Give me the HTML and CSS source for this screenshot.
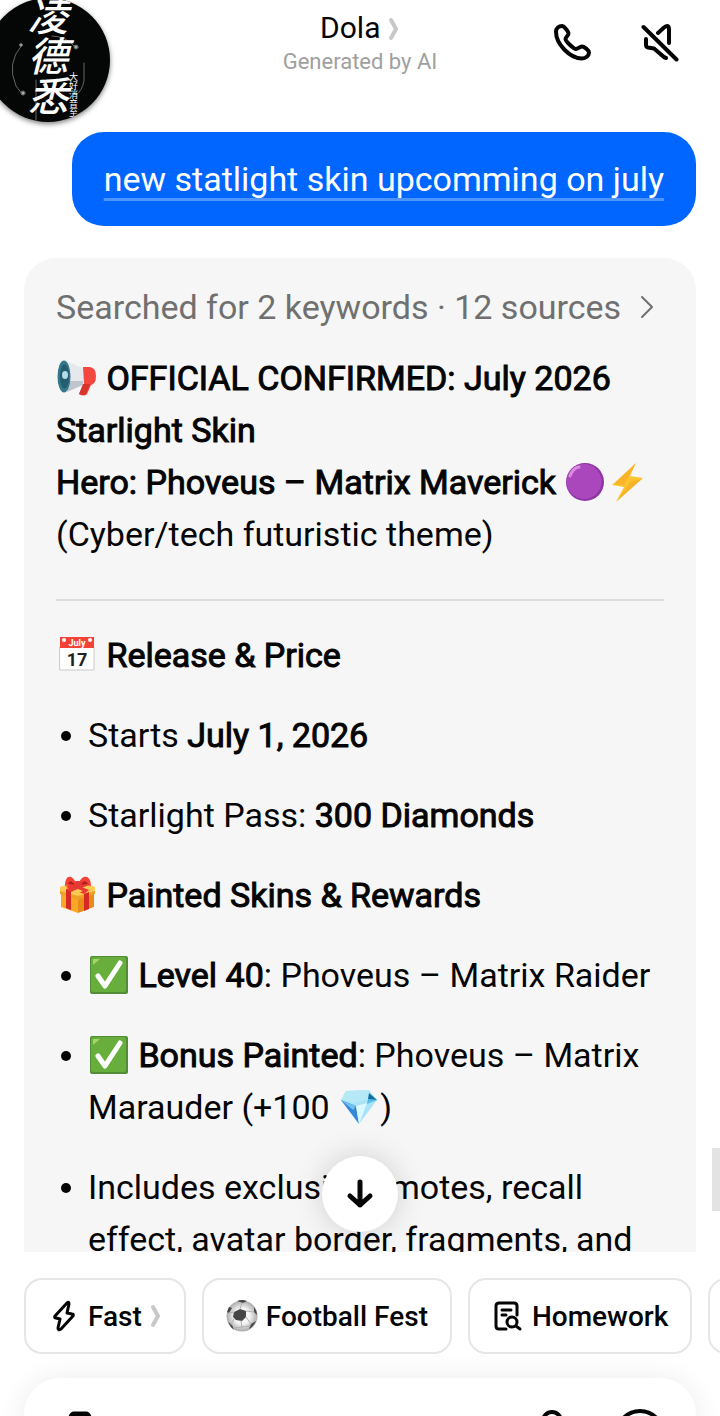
FILE: index.html
```html
<!DOCTYPE html>
<html lang="en">
<head>
    <meta charset="UTF-8">
    <meta name="viewport" content="width=device-width, initial-scale=1.0">
    <title>Dola</title>
    <link rel="stylesheet" href="styles.css">
</head>
<body>
    <header class="header">
        <div class="header-title">
            <h1>
                <a href="#">Dola
                    <svg class="chevron" viewBox="0 0 12 26"><path d="M3 4l5 9-5 9"/></svg>
                </a>
            </h1>
            <p>Generated by AI</p>
        </div>
        <div class="header-actions">
            <button class="icon-btn" aria-label="Call">
                <svg viewBox="0 0 40 40"><path d="M4 10C4 6 7 4 10 4C12 4 16 9 16.500 11C17 13 13.500 15 13.500 17C13.500 19 21.500 27 24 27C26 27 27.500 24.500 30 24.500C32 24.500 37 28 37 30.500C37 34 33.500 36.500 30 36.500C18 36.500 4 22 4 10Z"/></svg>
            </button>
            <button class="icon-btn" aria-label="Unmute">
                <svg viewBox="0 0 40 40"><path d="M3.500 5L36.500 37.500M18 11l6-5.500q5-4 5 2V21M6 17V23q0 2 2 2.500l6 1 7 6q3 3 5 3.500"/></svg>
            </button>
        </div>
    </header>

    <!-- Floating bubble -->
    <div class="avatar">
        <svg class="avatar-ring" viewBox="0 0 124 124"><path d="M36 47Q20 65 30 88L37 97M66 38Q80 38 89 49M98 65v18q-2 10-8 14M50 82v42"/><circle cx="35" cy="47" r="1.500"/><circle cx="90" cy="49" r="2"/><circle cx="37" cy="95" r="2"/></svg>
        <div class="avatar-name" lang="zh">凌德悉</div>
        <div class="avatar-motto" lang="zh">大好消音至</div>
    </div>

    <div class="chat-wrap">
        <main class="chat">
            <div class="message-user"><span>new statlight skin upcomming on july</span></div>

            <article class="message-bot">
                <a class="sources" href="#">
                    Searched for 2 keywords · 12 sources
                    <svg viewBox="0 0 16 28"><path d="M3 4l10 10L3 24"/></svg>
                </a>
                <p>
                    <svg class="emoji" viewBox="0 0 42 42"><path d="M10 4L27 11V27L10 35Z" fill="#e5e8ed"/><path d="M13 24L27 24V28L11 35Z" fill="#bfc5cf"/><ellipse cx="8" cy="19.500" rx="6.500" ry="16" fill="#31788a"/><ellipse cx="8.500" cy="19.500" rx="4.500" ry="12" fill="#255c6e"/><ellipse cx="9" cy="18" rx="3" ry="4" fill="#b4dbe8"/><path d="M27 10h7q6 1 6 9t-5 9l-4 9q-3 3-8 0l5-10z" fill="#f4483e"/><path d="M27 27h7l-4 10q-3 2-7 0z" fill="#d8342d"/></svg>
                    <strong>OFFICIAL CONFIRMED: July 2026 Starlight Skin</strong><br>
                    <strong>Hero: Phoveus – Matrix Maverick</strong>
                    <span class="emoji-pair"><svg class="emoji" viewBox="0 0 42 42"><circle cx="21" cy="21" r="19" fill="#8e35a5"/><circle cx="20" cy="20.500" r="17.500" fill="#ab47bc"/><path d="M6 15Q9 7 15 6" stroke="#d98be0" stroke-width="3" stroke-linecap="round" fill="none"/></svg><svg class="emoji" viewBox="0 0 42 42"><path d="M30 2L6 24l12 2-8 15 27-24-13-2z" fill="#fcc42d"/><path d="M30 2L8 23l10 1zM25 20l-14 20 25-22z" fill="#f7a928" opacity=".6"/></svg></span><br>
                    (Cyber/tech futuristic theme)
                </p>
                <hr>
                <h2>
                    <svg class="emoji" viewBox="0 0 42 42"><path d="M4 13h34v23H4z" fill="#fff" stroke="#c9c9c9"/><path d="M4 3h34v11H4z" fill="#f44336"/><circle cx="8" cy="6" r="2" fill="#fff"/><circle cx="34" cy="6" r="2" fill="#fff"/><text class="cal-month" x="21" y="12">July</text><text class="cal-day" x="21" y="32">17</text></svg>
                    Release &amp; Price
                </h2>
                <ul>
                    <li>Starts <strong>July 1, 2026</strong></li>
                    <li>Starlight Pass: <strong>300 Diamonds</strong></li>
                </ul>
                <h2>
                    <svg class="emoji" viewBox="0 0 42 42"><path d="M5 17l17 5v17L5 33z" fill="#f9a825"/><path d="M22 22l16-5v16l-16 6z" fill="#e88b19"/><path d="M4 13l18-6 17 6v6l-17 6-18-6z" fill="#ffca52"/><path d="M4 17v3l18 6 17-6v-3l-17 5z" fill="#eda025"/><path d="M10 15l5 2v19l-5-2zM28 20l5-2v17l-5 2z" fill="#d62824"/><path d="M10 15l18-7 5 3-18 7zM15 9l18 7-5 4-18-7z" fill="#ec3834"/><path d="M17 17l5-2 5 2-5 2z" fill="#ffca52"/><path d="M21 11C16-1 9 1 9 12q6-2 12 1zM22 11C26-1 35 1 35 12q-6-2-13 1z" fill="#f44336"/><path d="M19 11Q14 4 12 10zM24 11Q29 4 32 10z" fill="#b71c1c"/><rect x="18" y="7" width="8" height="7" rx="3" fill="#e53935"/></svg>
                    Painted Skins &amp; Rewards
                </h2>
                <ul>
                    <li><svg class="emoji" viewBox="0 0 42 42"><rect x="2" y="2" width="38" height="38" rx="2" fill="#538c37"/><rect x="3" y="3" width="35" height="35" rx="2" fill="#68ae3c"/><path d="M5 11V5h7z" fill="#a6d46f"/><path d="M10 22l7 10L32 9" class="tick"/></svg>
                        <strong>Level 40</strong>: Phoveus – Matrix Raider
                    </li>
                    <li><svg class="emoji" viewBox="0 0 42 42"><rect x="2" y="2" width="38" height="38" rx="2" fill="#538c37"/><rect x="3" y="3" width="35" height="35" rx="2" fill="#68ae3c"/><path d="M5 11V5h7z" fill="#a6d46f"/><path d="M10 22l7 10L32 9" class="tick"/></svg>
                        <strong>Bonus Painted</strong>: Phoveus – Matrix Marauder (+100
                        <svg class="emoji" viewBox="0 0 42 42"><path d="M3 14L8 5l23-1 8 10-18 24z" fill="#a9e3f7"/><path d="M3 14l15 6 3 18z" fill="#3487d7"/><path d="M8 5L3 14l14 3 13-4 1-9z" fill="#b6e9f6"/><path d="M18 20l11-3-8 21z" fill="#dcf9ff"/><path d="M30 13l9 1-10 4z" fill="#58bce9"/><path d="M31 7l8 7-9-1z" fill="#10719f"/><path d="M3 14l15 6-3 4z" fill="#71bfef"/></svg>)
                    </li>
                    <li>Includes exclusive emotes, recall effect, avatar border, fragments, and</li>
                </ul>
            </article>
        </main>
        <button class="scroll-btn" aria-label="Scroll to bottom">
            <svg viewBox="0 0 32 32"><path d="M16 4v23M6 18l10 9 10-9"/></svg>
        </button>
        <div class="edge-handle"></div>
    </div>

    <footer class="footer">
        <nav class="chips">
            <button class="chip">
                <svg viewBox="0 0 32 32"><path d="M19 3L7 16q-1 2 1 2l4 1-2 9q0 3 3 1l12-13q1-2-1-2l-5-1 2-9q0-3-2-1z"/></svg>
                Fast
                <svg class="chevron" viewBox="0 0 12 26"><path d="M3 4l5 9-5 9"/></svg>
            </button>
            <button class="chip">
                <svg class="ball" viewBox="0 0 32 32"><defs><radialGradient id="shade"><stop offset=".5" stop-color="#f5f5f5"/><stop offset="1" stop-color="#aaa"/></radialGradient></defs><circle cx="16" cy="16" r="15.500" fill="url(#shade)"/><path d="M8 12l6-3 6 2v6l-4 4-6-1-3-3zM11 1q5-2 10 0l-4 2zM28 7q3 4 3 8l-3-3zM1 12l2-5 3 1-3 5zM2 22l4 3 2 5Q4 27 2 22zM30 21q-3 6-7 8l2-5z" fill="#454545"/><path d="M14 9l2-6M20 11l8 1M20 17l5 7M15 21l1 6M8 19l-3 6M8 12l-5 1M16 27l-8 1M16 27l8-1" stroke="#b0b0b0" fill="none"/></svg>
                Football Fest
            </button>
            <button class="chip">
                <svg viewBox="0 0 32 32"><path d="M14 29H7q-3 0-3-3V6q0-3 3-3h15q3 0 3 3v9M10 10h9M10 15h4"/><circle cx="20" cy="22" r="5"/><path d="M24 26l4 3"/></svg>
                Homework
            </button>
            <button class="chip" aria-label="More"></button>
        </nav>
        <div class="composer">
            <button aria-label="Camera">
                <svg class="camera" viewBox="0 0 52 52"><path d="M4 17q0-4 4-4h7l2-4q1-3 3-3h12q2 0 3 3l2 4h7q4 0 4 4v26q0 4-4 4H8q-4 0-4-4z"/><circle cx="26" cy="29" r="9"/></svg>
            </button>
            <input type="text" aria-label="Message">
            <button aria-label="Voice">
                <svg viewBox="0 0 52 52"><rect x="17" y="4" width="18" height="28" rx="9"/><path d="M8 24q0 16 18 16t18-16M26 40v9"/></svg>
            </button>
            <button aria-label="Add">
                <svg viewBox="0 0 52 52"><circle cx="26" cy="26" r="23"/><path d="M26 15v22M15 26h22"/></svg>
            </button>
        </div>
    </footer>
</body>
</html>
```
FILE: styles.css
```css
* {
    margin: 0;
    padding: 0;
    box-sizing: border-box;
}

body {
    font-family: Roboto, sans-serif;
    background: #fff;
    color: #050505;
    height: 100vh;
    overflow: hidden;
    position: relative;
}

button {
    border: none;
    background: none;
    font: inherit;
    color: inherit;
    cursor: pointer;
}

a {
    color: inherit;
    text-decoration: none;
}

svg {
    fill: none;
    stroke-linecap: round;
    stroke-linejoin: round;
}

/* Header */
.header {
    display: grid;
    grid-template-columns: 1fr auto 1fr;
    height: 108px;
    padding: 8px 40px;
}

.header-title {
    grid-column: 2;
    text-align: center;
}

.header-title h1 {
    font-size: 30px;
    font-weight: 400;
    line-height: 40px;
}

.header-title p {
    font-size: 22px;
    line-height: 28px;
    color: #a0a0a0;
}

.chevron {
    width: 12px;
    height: 26px;
    stroke: #c8c8c8;
    stroke-width: 4;
    vertical-align: -4px;
}

.header-actions {
    display: flex;
    justify-content: flex-end;
    align-items: flex-start;
    gap: 48px;
    padding-top: 14px;
}

.icon-btn svg {
    display: block;
    width: 40px;
    height: 40px;
    stroke: #050505;
    stroke-width: 4;
}

/* Floating avatar */
.avatar {
    position: absolute;
    top: -2px;
    left: -14px;
    width: 124px;
    height: 124px;
    border-radius: 50%;
    background: #050606;
    color: #fff;
    box-shadow: 0 2px 5px rgba(0, 0, 0, 0.5);
    overflow: hidden;
    font-family: "Noto Sans CJK SC", sans-serif;
}

.avatar-ring {
    position: absolute;
    inset: 0;
    stroke: #666;
}

.avatar-ring circle {
    fill: #aaa;
}

.avatar-name,
.avatar-motto {
    position: absolute;
    writing-mode: vertical-rl;
    white-space: nowrap;
}

.avatar-name {
    top: -2px;
    left: 42px;
    font-size: 40px;
    line-height: 40px;
    font-weight: 500;
    font-style: italic;
}

.avatar-motto {
    top: 74px;
    left: 82px;
    font-size: 9px;
    line-height: 10px;
}

/* Chat */
.chat-wrap {
    position: relative;
}

.chat {
    height: calc(100vh - 272px);
    padding: 24px 24px 0;
    display: flex;
    flex-direction: column;
    gap: 32px;
    overflow: hidden;
    font-size: 34px;
    line-height: 52px;
}

.message-user {
    align-self: flex-end;
    padding: 24px 32px;
    border-radius: 32px;
    background: #0066ff;
    color: #fff;
    line-height: 46px;
}

.message-user span {
    text-decoration: underline 3px #4d94ff;
    text-decoration-skip-ink: none;
    text-underline-offset: 7px;
}

.message-bot {
    padding: 24px 32px;
    border-radius: 32px;
    background: #f6f6f6;
}

.sources {
    display: flex;
    align-items: center;
    gap: 18px;
    margin-bottom: 20px;
    line-height: 50px;
    color: #707070;
}

.sources svg {
    width: 16px;
    height: 28px;
    stroke: #707070;
    stroke-width: 2;
}

/* Emboldened regular weight */
strong,
h2 {
    font-weight: 400;
    -webkit-text-stroke: 1px #050505;
}

h2 {
    font-size: 34px;
}

hr {
    border: none;
    height: 2px;
    background: #dedede;
    margin: 39px 0 28px;
}

ul {
    list-style: none;
    margin: 28px 0;
    display: grid;
    gap: 28px;
}

li {
    padding-left: 32px;
}

li::before {
    content: "";
    display: inline-block;
    width: 10px;
    height: 10px;
    margin: 0 17px 0 -27px;
    border-radius: 50%;
    background: #050505;
    vertical-align: 6px;
}

.emoji {
    width: 42px;
    height: 42px;
    vertical-align: -9px;
}

.emoji-pair {
    white-space: nowrap;
}

.cal-month,
.cal-day {
    text-anchor: middle;
    font-weight: 700;
    -webkit-text-stroke: 0;
}

.cal-month {
    font-size: 9px;
    fill: #fff;
}

.cal-day {
    font-size: 18px;
    fill: #222;
}

.tick {
    stroke: #fff;
    stroke-width: 5;
}

.scroll-btn {
    position: absolute;
    bottom: 20px;
    left: calc(50% - 38px);
    width: 76px;
    height: 76px;
    border-radius: 50%;
    background: #fff;
    box-shadow: 0 0 30px rgba(0, 0, 0, 0.16);
    display: grid;
    place-items: center;
}

.scroll-btn svg {
    width: 32px;
    height: 32px;
    stroke: #050505;
    stroke-width: 5;
}

.edge-handle {
    position: absolute;
    right: 0;
    bottom: 41px;
    width: 8px;
    height: 63px;
    background: #e3e3e3;
}

/* Footer */
.footer {
    padding-top: 26px;
}

.chips {
    display: flex;
    gap: 16px;
    padding: 0 24px;
    margin-bottom: 24px;
    overflow: hidden;
}

.chip {
    flex: none;
    display: flex;
    align-items: center;
    gap: 8px;
    min-width: 120px;
    height: 76px;
    padding: 0 22px;
    border: 2px solid #e6e6e6;
    border-radius: 18px;
    font-size: 28px;
    font-weight: 500;
}

.chip svg:first-child {
    width: 32px;
    height: 32px;
    stroke: #050505;
    stroke-width: 3;
}

.chip .ball:first-child {
    stroke: none;
    stroke-width: 1;
}

.composer {
    display: flex;
    align-items: center;
    gap: 36px;
    margin: 0 24px;
    padding: 30px;
    border-radius: 36px;
    background: #fff;
    box-shadow: 0 0 28px rgba(0, 0, 0, 0.08);
}

.composer svg {
    display: block;
    width: 52px;
    height: 52px;
    stroke: #050505;
    stroke-width: 4;
}

.composer .camera {
    stroke-width: 5;
}

.composer input {
    flex: 1;
    min-width: 0;
    border: none;
    outline: none;
    font: inherit;
    font-size: 34px;
}
```
